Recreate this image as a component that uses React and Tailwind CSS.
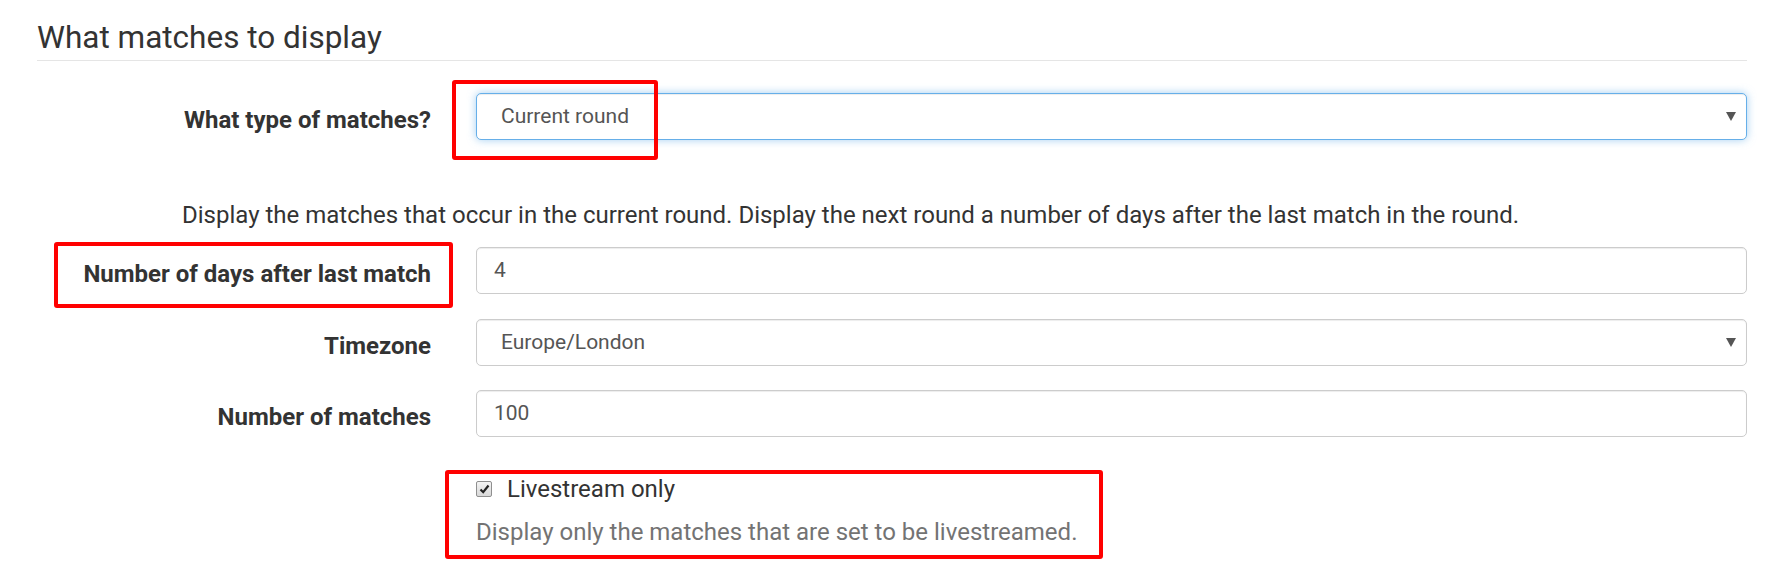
import React from "react";

function Arrow() {
  return (
    <svg width="10" height="9" viewBox="0 0 10 9" className="shrink-0">
      <polygon points="0,0 10,0 5,9" fill="#555555" />
    </svg>
  );
}

function Row({ label, children, className = "" }) {
  return (
    <div className={"flex items-start " + className}>
      <div className="w-[394px] shrink-0 text-right pt-[11px] leading-[32px] text-[24px] font-bold text-[#333333]">
        {label}
      </div>
      <div className="ml-[45px] flex-1">{children}</div>
    </div>
  );
}

function Select({ value, focused }) {
  return (
    <div
      className={
        "h-[47px] w-full flex items-center justify-between rounded-[5px] border bg-white pl-[24px] pr-[10px] text-[21px] text-[#555555] " +
        (focused
          ? "border-[#66afe9] shadow-[inset_0_1px_1px_rgba(0,0,0,0.075),0_0_8px_rgba(102,175,233,0.6)]"
          : "border-[#cccccc] shadow-[inset_0_1px_1px_rgba(0,0,0,0.075)]")
      }
    >
      <span>{value}</span>
      <Arrow />
    </div>
  );
}

function Input({ value }) {
  return (
    <div className="h-[47px] w-full flex items-center rounded-[5px] border border-[#cccccc] bg-white px-[17px] text-[21px] text-[#555555] shadow-[inset_0_1px_1px_rgba(0,0,0,0.075)]">
      {value}
    </div>
  );
}

export default function App() {
  return (
    <div
      className="relative w-full h-[585px] bg-white overflow-hidden"
      style={{ fontFamily: "Roboto, 'Liberation Sans', sans-serif" }}
    >
      <div className="pl-[37px] pr-[30px]">
        <h3 className="pt-[20px] pb-[4px] leading-[36px] text-[31.5px] font-normal text-[#333333] border-b border-[#e5e5e5]">
          What matches to display
        </h3>

        <Row label="What type of matches?" className="mt-[32px]">
          <Select value="Current round" focused />
        </Row>

        <p className="mt-[60px] ml-[145px] leading-[30px] text-[24px] text-[#333333]">
          Display the matches that occur in the current round. Display the next round a number of days after the last match in the round.
        </p>

        <Row label="Number of days after last match" className="mt-[17px]">
          <Input value="4" />
        </Row>

        <Row label="Timezone" className="mt-[25px]">
          <Select value="Europe/London" />
        </Row>

        <Row label="Number of matches" className="mt-[24px]">
          <Input value="100" />
        </Row>

        <div className="ml-[439px] mt-[37px]">
          <label className="flex items-center leading-[30px] text-[24px] text-[#333333]">
            <span className="w-[16px] h-[16px] rounded-[2px] border border-[#8f8f8f] bg-gradient-to-b from-[#f4f4f4] to-[#d8d8d8] flex items-center justify-center">
              <svg width="11" height="10" viewBox="0 0 11 10">
                <path d="M1.5 5.5 L4.2 8.2 L9.5 1.5" fill="none" stroke="#222222" strokeWidth="2.2" />
              </svg>
            </span>
            <span className="ml-[15px]">Livestream only</span>
          </label>
          <p className="mt-[13px] leading-[30px] text-[24px] text-[#737373]">
            Display only the matches that are set to be livestreamed.
          </p>
        </div>
      </div>

      <div className="absolute left-[452px] top-[80px] w-[206px] h-[80px] border-[4px] border-[#ff0000] rounded-[3px]" />
      <div className="absolute left-[54px] top-[242px] w-[399px] h-[66px] border-[4px] border-[#ff0000] rounded-[3px]" />
      <div className="absolute left-[445px] top-[470px] w-[658px] h-[89px] border-[4px] border-[#ff0000] rounded-[3px]" />
    </div>
  );
}
